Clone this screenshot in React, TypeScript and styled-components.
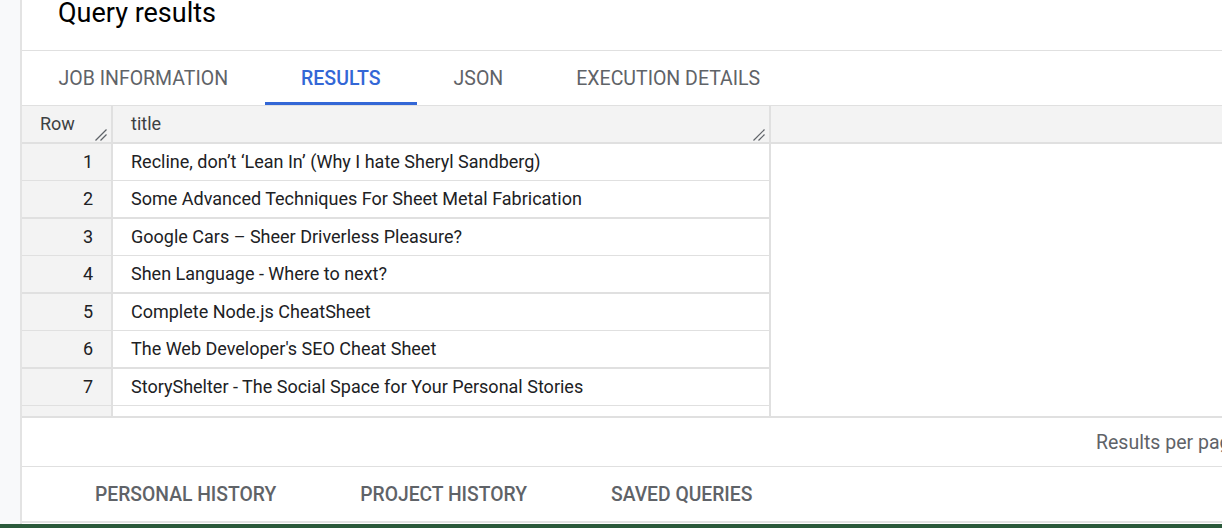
import React from "react";
import styled, { createGlobalStyle } from "styled-components";

const Global = createGlobalStyle`
  html, body { margin: 0; padding: 0; background: #fff; overflow: hidden; }
  body { font-family: Roboto, "Noto Sans", Arial, sans-serif; }
  * { box-sizing: border-box; }
`;

const Page = styled.div`
  width: 1222px;
  height: 528px;
  display: flex;
  flex-direction: column;
  overflow: hidden;
`;

const Body = styled.div`
  flex: 1;
  display: flex;
  min-height: 0;
`;

const Sidebar = styled.div`
  width: 22px;
  flex: none;
  background: #f8f9fa;
  border-right: 2px solid #e3e3e3;
`;

const Main = styled.div`
  flex: 1;
  display: flex;
  flex-direction: column;
  min-width: 0;
`;

const TitleBar = styled.div`
  height: 51px;
  flex: none;
  border-bottom: 1px solid #e0e0e0;
  padding-left: 36px;
  display: flex;
  align-items: flex-start;
`;

const Title = styled.h1`
  margin: 0;
  margin-top: -4px;
  font-size: 27px;
  line-height: 34px;
  font-weight: 400;
  color: #000;
`;

const TabBar = styled.div`
  height: 55px;
  flex: none;
  display: flex;
  border-bottom: 1px solid #e0e0e0;
`;

const Tab = styled.div<{ $active?: boolean }>`
  padding: 4px 36.5px 0;
  display: flex;
  align-items: center;
  font-size: 19.5px;
  font-weight: ${(p) => (p.$active ? 500 : 400)};
  color: ${(p) => (p.$active ? "#3367d6" : "#5f6368")};
  border-bottom: 3px solid ${(p) => (p.$active ? "#3367d6" : "transparent")};
`;

const Grid = styled.div`
  height: 312px;
  flex: none;
  border-bottom: 2px solid #e0e0e0;
  display: flex;
  flex-direction: column;
  overflow: hidden;
`;

const HeaderRow = styled.div`
  height: 38px;
  flex: none;
  display: flex;
  background: #f3f3f3;
  border-bottom: 2px solid #e0e0e0;
`;

const HeaderCell = styled.div<{ $w?: number }>`
  position: relative;
  width: ${(p) => (p.$w ? `${p.$w}px` : "auto")};
  flex: ${(p) => (p.$w ? "none" : "1")};
  border-right: ${(p) => (p.$w ? "2px solid #e0e0e0" : "none")};
  padding-left: 18px;
  padding-bottom: 2px;
  display: flex;
  align-items: center;
  font-size: 18px;
  color: #3c4043;
`;

const Grip = styled.svg`
  position: absolute;
  right: 4px;
  bottom: 1px;
  width: 12px;
  height: 12px;
`;

const DataRow = styled.div<{ $thick?: boolean }>`
  height: ${(p) => (p.$thick ? 38 : 37)}px;
  flex: none;
  display: flex;
`;

const NumCell = styled.div<{ $thick?: boolean }>`
  width: 91px;
  flex: none;
  background: #f3f3f3;
  border-right: 2px solid #e0e0e0;
  border-bottom: ${(p) => (p.$thick ? 2 : 1)}px solid #e0e0e0;
  display: flex;
  align-items: center;
  justify-content: flex-end;
  padding-right: 18px;
  padding-bottom: 1px;
  font-size: 18px;
  color: #202124;
`;

const TextCell = styled.div<{ $thick?: boolean }>`
  width: 658px;
  flex: none;
  border-right: 2px solid #e0e0e0;
  border-bottom: ${(p) => (p.$thick ? 2 : 1)}px solid #e0e0e0;
  display: flex;
  align-items: center;
  padding-left: 18px;
  padding-bottom: 1px;
  font-size: 18px;
  color: #202124;
  white-space: nowrap;
`;

const Footer = styled.div`
  height: 49px;
  flex: none;
  border-bottom: 1px solid #e0e0e0;
  display: flex;
  align-items: center;
  padding-left: 1074px;
  white-space: nowrap;
  font-size: 19.5px;
  color: #5f6368;
`;

const BottomTabs = styled.div`
  height: 56px;
  flex: none;
  display: flex;
  padding-left: 31px;
  border-bottom: 2px solid #e3e3e3;
`;

const BottomTab = styled.div`
  padding: 0 42px;
  display: flex;
  align-items: center;
  font-size: 19.3px;
  font-weight: 500;
  color: #5f6368;
`;

const GreenStripe = styled.div`
  height: 4px;
  flex: none;
  background: #2b5a3b;
`;

const GripIcon = () => (
  <Grip viewBox="0 0 12 12">
    <line x1="0.5" y1="11.5" x2="11.5" y2="0.5" stroke="#5f6368" strokeWidth="1.2" />
    <line x1="5.5" y1="11.5" x2="11.5" y2="5.5" stroke="#5f6368" strokeWidth="1.2" />
  </Grip>
);

const rows = [
  "Recline, don\u2019t \u2018Lean In\u2019 (Why I hate Sheryl Sandberg)",
  "Some Advanced Techniques For Sheet Metal Fabrication",
  "Google Cars \u2013 Sheer Driverless Pleasure?",
  "Shen Language - Where to next?",
  "Complete Node.js CheatSheet",
  "The Web Developer's SEO Cheat Sheet",
  "StoryShelter - The Social Space for Your Personal Stories",
  "",
];

export default function App() {
  return (
    <Page>
      <Global />
      <Body>
        <Sidebar />
        <Main>
          <TitleBar>
            <Title>Query results</Title>
          </TitleBar>
          <TabBar>
            <Tab>JOB INFORMATION</Tab>
            <Tab $active>RESULTS</Tab>
            <Tab>JSON</Tab>
            <Tab>EXECUTION DETAILS</Tab>
          </TabBar>
          <Grid>
            <HeaderRow>
              <HeaderCell $w={91}>
                Row
                <GripIcon />
              </HeaderCell>
              <HeaderCell $w={658}>
                title
                <GripIcon />
              </HeaderCell>
              <HeaderCell />
            </HeaderRow>
            {rows.map((t, i) => (
              <DataRow key={i} $thick={i % 2 === 1}>
                <NumCell $thick={i % 2 === 1}>{t ? i + 1 : ""}</NumCell>
                <TextCell $thick={i % 2 === 1}>{t}</TextCell>
              </DataRow>
            ))}
          </Grid>
          <Footer>Results per page:</Footer>
          <BottomTabs>
            <BottomTab>PERSONAL HISTORY</BottomTab>
            <BottomTab>PROJECT HISTORY</BottomTab>
            <BottomTab>SAVED QUERIES</BottomTab>
          </BottomTabs>
        </Main>
      </Body>
      <GreenStripe />
    </Page>
  );
}
